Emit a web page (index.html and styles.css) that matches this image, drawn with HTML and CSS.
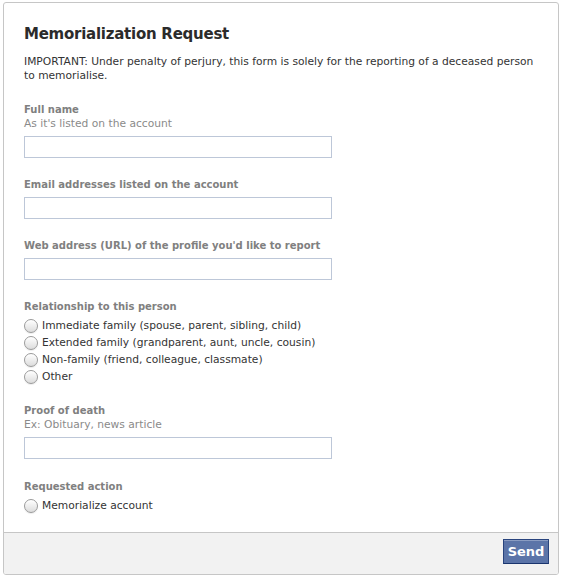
FILE: index.html
```html
<!DOCTYPE html>
<html>
<head>
<meta charset="utf-8">
<link rel="stylesheet" href="styles.css">
</head>
<body>
<div class="card">
  <div class="content">
    <h1 class="title">Memorialization Request</h1>
    <p class="notice">IMPORTANT: Under penalty of perjury, this form is solely for the reporting of a deceased person to memorialise.</p>

    <div class="field">
      <div class="label">Full name</div>
      <div class="sublabel">As it's listed on the account</div>
      <input class="text-input" type="text">
    </div>

    <div class="field">
      <div class="label">Email addresses listed on the account</div>
      <input class="text-input" type="text">
    </div>

    <div class="field">
      <div class="label">Web address (URL) of the profile you'd like to report</div>
      <input class="text-input" type="text">
    </div>

    <div class="field">
      <div class="label">Relationship to this person</div>
      <div class="radios">
        <label class="radio-row"><input class="radio" type="radio" name="rel"><span>Immediate family (spouse, parent, sibling, child)</span></label>
        <label class="radio-row"><input class="radio" type="radio" name="rel"><span>Extended family (grandparent, aunt, uncle, cousin)</span></label>
        <label class="radio-row"><input class="radio" type="radio" name="rel"><span>Non-family (friend, colleague, classmate)</span></label>
        <label class="radio-row"><input class="radio" type="radio" name="rel"><span>Other</span></label>
      </div>
    </div>

    <div class="field field-after-radios">
      <div class="label">Proof of death</div>
      <div class="sublabel">Ex: Obituary, news article</div>
      <input class="text-input" type="text">
    </div>

    <div class="field field-loose">
      <div class="label">Requested action</div>
      <div class="radios">
        <label class="radio-row"><input class="radio" type="radio" name="act"><span>Memorialize account</span></label>
      </div>
    </div>
  </div>
  <div class="footer">
    <button class="send" type="button">Send</button>
  </div>
</div>
</body>
</html>
```

FILE: styles.css
```css
html, body {
  margin: 0;
  padding: 0;
  background: #ffffff;
}

body {
  font-family: "DejaVu Sans", "Liberation Sans", sans-serif;
  font-size: 10.7px;
  color: #333333;
  padding: 2px 3px 0 3px;
}

.card {
  width: 556px;
  height: 573px;
  box-sizing: border-box;
  border: 1px solid #c6c6c6;
  border-radius: 3px;
  display: flex;
  flex-direction: column;
  overflow: hidden;
}

.content {
  flex: 1;
  padding: 21px 20px 0 20px;
}

.title {
  margin: 0;
  font-size: 15px;
  letter-spacing: -0.25px;
  line-height: 20px;
  font-weight: bold;
  color: #2b2b2b;
}

.notice {
  margin: 11px 0 0 0;
  line-height: 14px;
  color: #333333;
}

.field {
  margin-top: 20px;
  display: flex;
  flex-direction: column;
  align-items: flex-start;
}

.field-after-radios {
  margin-top: 19px;
}

.field-loose {
  margin-top: 21px;
}

.label {
  font-weight: bold;
  font-size: 10px;
  color: #808080;
  line-height: 14px;
}

.sublabel {
  color: #8a8a8a;
  line-height: 14px;
}

.text-input {
  margin: 5px 0 0 0;
  width: 308px;
  height: 22px;
  box-sizing: border-box;
  border: 1px solid #bdc7d8;
  background: #ffffff;
  padding: 0 3px;
  outline: none;
  border-radius: 0;
}

.radios {
  display: flex;
  flex-direction: column;
  margin-top: 3px;
}

.radio-row {
  display: flex;
  align-items: center;
  height: 17px;
  color: #333333;
}

.radio {
  -webkit-appearance: none;
  appearance: none;
  margin: 0 4px 0 0;
  width: 14px;
  height: 14px;
  box-sizing: border-box;
  border-radius: 50%;
  border: 1px solid #9a9a9a;
  background: linear-gradient(#ffffff, #dcdcdc);
  box-shadow: inset 0 1px 1px rgba(255,255,255,0.8), 0 1px 1px rgba(0,0,0,0.08);
}

.footer {
  height: 42px;
  box-sizing: border-box;
  background: #f2f2f2;
  border-top: 1px solid #c6c6c6;
  display: flex;
  justify-content: flex-end;
  align-items: flex-start;
  padding: 6px 9px 0 0;
}

.send {
  width: 46px;
  height: 25px;
  box-sizing: border-box;
  background: #5b74a8;
  border: 1px solid #29447e;
  border-bottom-color: #1a356e;
  box-shadow: inset 0 1px 0 #8a9cc2;
  color: #ffffff;
  font-family: "DejaVu Sans", "Liberation Sans", sans-serif;
  font-weight: bold;
  font-size: 13px;
  padding: 0;
  margin: 0;
}
```
